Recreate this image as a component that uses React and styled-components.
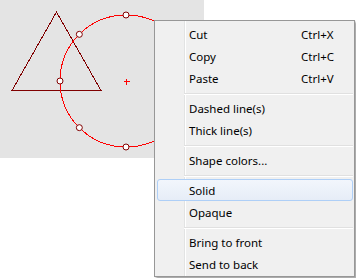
import styled, { createGlobalStyle } from 'styled-components';

const GlobalStyle = createGlobalStyle`
  html, body {
    margin: 0;
    padding: 0;
    background: #fff;
  }
  body {
    font-family: "Noto Sans", "Open Sans", sans-serif;
  }
`;

const menuGroups = [
  [
    { label: 'Cut', shortcut: 'Ctrl+X' },
    { label: 'Copy', shortcut: 'Ctrl+C' },
    { label: 'Paste', shortcut: 'Ctrl+V' }
  ],
  [{ label: 'Dashed line(s)' }, { label: 'Thick line(s)' }],
  [{ label: 'Shape colors...' }],
  [{ label: 'Solid', active: true }, { label: 'Opaque' }],
  [{ label: 'Bring to front' }, { label: 'Send to back' }]
];

// handles sit on the circle every 45 degrees (only the visible ones)
const handleAngles = [-90, -135, 180, 135, 90];

export default function App() {
  const cx = 126;
  const cy = 81;
  const r = 66;

  return (
    <Page>
      <GlobalStyle />
      <Canvas>
        <svg width="204" height="158" shapeRendering="crispEdges">
          <polygon
            points="56.5,12 12,90.5 101,90.5"
            fill="none"
            stroke="#800000"
            strokeWidth="1"
          />
          <circle
            cx={cx}
            cy={cy}
            r={r}
            fill="none"
            stroke="#ff0000"
            strokeWidth="1"
          />
          <path
            d={`M${cx - 2.5} ${cy + 0.5} H${cx + 3.5} M${cx + 0.5} ${cy - 2.5} V${cy + 3.5}`}
            stroke="#ff0000"
            strokeWidth="1"
          />
          {handleAngles.map((a) => {
            const rad = (a * Math.PI) / 180;
            return (
              <circle
                key={a}
                cx={cx + r * Math.cos(rad)}
                cy={cy + r * Math.sin(rad)}
                r="3"
                fill="#fff"
                stroke="#800000"
                strokeWidth="1"
                shapeRendering="auto"
              />
            );
          })}
        </svg>
      </Canvas>

      <Menu>
        {menuGroups.map((group, gi) => (
          <Group key={gi}>
            {gi > 0 && <Separator />}
            {group.map((item) => (
              <Item key={item.label} $active={item.active}>
                <Label>{item.label}</Label>
                {item.shortcut && <Shortcut>{item.shortcut}</Shortcut>}
              </Item>
            ))}
          </Group>
        ))}
      </Menu>
    </Page>
  );
}

const Page = styled.div`
  position: relative;
  width: 356px;
  height: 278px;
  overflow: hidden;
`;

const Canvas = styled.div`
  width: 204px;
  height: 158px;
  background: #e4e4e4;
  svg {
    display: block;
  }
`;

const Menu = styled.div`
  position: absolute;
  left: 154px;
  top: 20px;
  width: 199px;
  padding: 2px 0 1px;
  background: #f0f0f0;
  border: 1px solid #979797;
  box-shadow: 2px 2px 2px rgba(0, 0, 0, 0.35);
  display: flex;
  flex-direction: column;
  &::before {
    content: '';
    position: absolute;
    top: 0;
    bottom: 0;
    left: 29px;
    width: 1px;
    background: #e2e3e3;
    border-right: 1px solid #fff;
  }
`;

const Group = styled.div`
  display: flex;
  flex-direction: column;
`;

const Separator = styled.div`
  height: 8px;
  margin: 0 1px 0 29px;
  position: relative;
  &::after {
    content: '';
    position: absolute;
    left: 0;
    right: 0;
    top: 4px;
    height: 1px;
    background: #e0e0e0;
    border-bottom: 1px solid #fff;
  }
`;

const Item = styled.div`
  position: relative;
  z-index: 1;
  display: grid;
  grid-template-columns: 112px 1fr;
  align-items: center;
  height: 22px;
  box-sizing: border-box;
  margin: 0 1px 0 2px;
  padding-left: 31px;
  font-size: 11.5px;
  color: #000;
  border: 1px solid ${({ $active }) => ($active ? '#aecff7' : 'transparent')};
  border-radius: 3px;
  background: ${({ $active }) =>
    $active ? 'linear-gradient(#f2f6fc, #e6edf7)' : 'transparent'};
`;

const Label = styled.span`
  grid-column: 1;
  white-space: nowrap;
`;

const Shortcut = styled.span`
  grid-column: 2;
  white-space: nowrap;
`;
